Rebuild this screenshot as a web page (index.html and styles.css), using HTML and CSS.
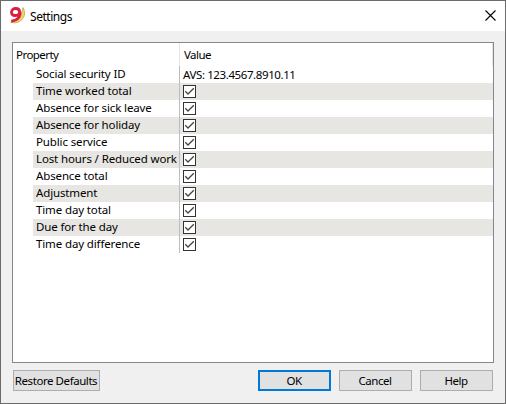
FILE: index.html
```
<!DOCTYPE html>
<html lang="en">
<head>
<meta charset="utf-8">
<title>Settings</title>
<link rel="stylesheet" href="styles.css">
</head>
<body>
<svg class="defs" width="0" height="0" aria-hidden="true">
  <symbol id="check" viewBox="0 0 13 13"><rect x=".5" y=".5" width="12" height="12" fill="#fff" stroke="#333"/><path d="M2.3 6.3 5 9 10.8 3.2" fill="none" stroke="#444" stroke-width="1.3"/></symbol>
</svg>
<main class="window">
  <header class="titlebar">
    <svg class="logo" viewBox="0 0 17 18"><path d="M14 1.6C17.3 7 15.4 13.6 9 16.2 6.5 17.1 3 17 1.6 16.2 9 14.8 13 9.5 14 1.6Z" fill="#f3d66b" stroke="#b99a4c" stroke-width=".7"/><path d="M10.6 6C10.6 3.8 9 2.5 6.7 2.5 4.3 2.5 2.5 4 2.5 6.2 2.5 8.4 4.1 9.5 6.2 9.5 8.8 9.5 10.6 8.2 10.6 6ZM10.7 5.4C12.2 10.2 8.6 14.8 2.2 15.1" fill="none" stroke="#d8213f" stroke-width="2.8"/></svg>
    <h1 class="title">Settings</h1>
    <svg class="close" viewBox="0 0 11 11"><path d="M.5.5 10.5 10.5M10.5.5.5 10.5" stroke="#000" stroke-width="1.1"/></svg>
  </header>
  <section class="panel">
    <div class="head"><span class="col">Property</span><span class="val">Value</span></div>
    <div class="row"><span class="name">Social security ID</span><span class="cell avs">AVS: 123.4567.8910.11</span></div>
    <div class="row"><span class="name">Time worked total</span><span class="cell"><svg class="box"><use href="#check"/></svg></span></div>
    <div class="row"><span class="name">Absence for sick leave</span><span class="cell"><svg class="box"><use href="#check"/></svg></span></div>
    <div class="row"><span class="name">Absence for holiday</span><span class="cell"><svg class="box"><use href="#check"/></svg></span></div>
    <div class="row"><span class="name">Public service</span><span class="cell"><svg class="box"><use href="#check"/></svg></span></div>
    <div class="row"><span class="name">Lost hours / Reduced work</span><span class="cell"><svg class="box"><use href="#check"/></svg></span></div>
    <div class="row"><span class="name">Absence total</span><span class="cell"><svg class="box"><use href="#check"/></svg></span></div>
    <div class="row"><span class="name">Adjustment</span><span class="cell"><svg class="box"><use href="#check"/></svg></span></div>
    <div class="row"><span class="name">Time day total</span><span class="cell"><svg class="box"><use href="#check"/></svg></span></div>
    <div class="row"><span class="name">Due for the day</span><span class="cell"><svg class="box"><use href="#check"/></svg></span></div>
    <div class="row"><span class="name">Time day difference</span><span class="cell"><svg class="box"><use href="#check"/></svg></span></div>
  </section>
  <footer class="buttons">
    <button class="btn restore">Restore Defaults</button>
    <button class="btn primary">OK</button>
    <button class="btn">Cancel</button>
    <button class="btn">Help</button>
  </footer>
</main>
</body>
</html>
```
FILE: styles.css
```
* { box-sizing: border-box; }
body { margin: 0; font: 11.5px/17px "Noto Sans", "Open Sans", sans-serif; color: #000; }
.defs { display: block; height: 0; }
.window { width: 506px; height: 404px; border: 1px solid #6b6b6b; background: #f0f0f0; display: flex; flex-direction: column; overflow: hidden; }
.titlebar { height: 30px; background: #fff; display: flex; align-items: center; padding: 0 9px 0 8px; }
.logo { width: 17px; height: 18px; margin-bottom: 2px; }
.title { margin: 0 auto 0 4px; font-size: 12px; font-weight: 400; letter-spacing: -.45px; }
.close { width: 11px; height: 11px; margin-bottom: 2px; }
.panel { margin: 11px 11px 0; height: 321px; border: 1px solid #828790; background: #fff; letter-spacing: -.13px; white-space: nowrap; }
.head { height: 23px; display: flex; line-height: 24px; letter-spacing: -.55px; border-right: 1px solid #e5e5e5; }
.col { width: 167px; padding-left: 3px; border-right: 1px solid #e5e5e5; }
.val { padding-left: 4px; }
.row { height: 17px; margin-left: 20px; display: flex; line-height: 15px; }
.row:nth-child(odd) { background: #e8e6e2; }
.name { width: 147px; padding-left: 3px; border-right: 1px solid #bebebe; }
.cell { padding: 2px 0 0 3px; }
.avs { letter-spacing: -.4px; padding-top: 1px; }
.box { display: block; width: 13px; height: 13px; }
.buttons { display: flex; gap: 8px; margin: 7px 12px 0; }
.btn { width: 73px; height: 21px; padding: 0 1px 0 0; border: 1px solid #adadad; background: #e1e1e1; font: inherit; letter-spacing: -.5px; line-height: 18px; color: #000; white-space: nowrap; }
.restore { width: 87px; margin-right: auto; letter-spacing: -.43px; }
.primary { border: 2px solid #0078d7; line-height: 16px; }
```
